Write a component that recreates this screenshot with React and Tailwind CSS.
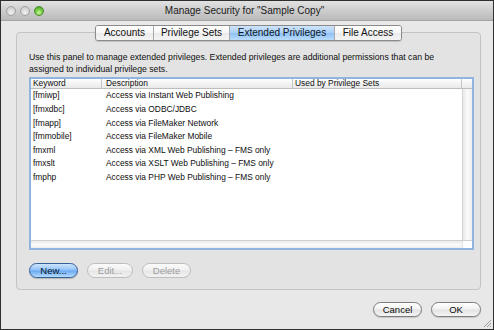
import React from "react";

const rows = [
  ["[fmiwp]", "Access via Instant Web Publishing"],
  ["[fmxdbc]", "Access via ODBC/JDBC"],
  ["[fmapp]", "Access via FileMaker Network"],
  ["[fmmobile]", "Access via FileMaker Mobile"],
  ["fmxml", "Access via XML Web Publishing – FMS only"],
  ["fmxslt", "Access via XSLT Web Publishing – FMS only"],
  ["fmphp", "Access via PHP Web Publishing – FMS only"],
];

const tabs = [
  ["Accounts", "w-[57px]", false],
  ["Privilege Sets", "w-[76px]", false],
  ["Extended Privileges", "w-[105px]", true],
  ["File Access", "w-[67px]", false],
];

function Light({ green }) {
  return (
    <div
      className={
        green
          ? "w-[10px] h-[10px] rounded-full border border-[#4c8a2c] bg-[radial-gradient(circle_at_50%_70%,#c8f59a,#6cc63a_55%,#3e9a1e)]"
          : "w-[10px] h-[10px] rounded-full border border-[#a2a2a2] bg-[radial-gradient(circle_at_50%_70%,#f2f2f2,#d4d4d4_60%,#c2c2c2)]"
      }
    />
  );
}

function Pill({ children, w, kind }) {
  const base =
    "h-[15px] rounded-full border flex items-center justify-center text-[9.5px] leading-none " + w + " ";
  if (kind === "blue")
    return (
      <div
        className={
          base +
          "border-[#365f96] text-[#08142a] bg-[linear-gradient(#cde5fd,#8fc2f7_48%,#68a8f0_52%,#b5dcff)] shadow-[0_1px_1px_rgba(0,0,0,0.2)]"
        }
      >
        {children}
      </div>
    );
  if (kind === "disabled")
    return (
      <div
        className={
          base +
          "border-[#bdbdbd] text-[#9c9c9c] bg-[linear-gradient(#fbfbfb,#f0f0f0_48%,#e6e6e6_52%,#f2f2f2)]"
        }
      >
        {children}
      </div>
    );
  return (
    <div
      className={
        base +
        "border-[#7c7c7c] text-[#0a0a0a] bg-[linear-gradient(#ffffff,#f2f2f2_48%,#e2e2e2_52%,#f5f5f5)] shadow-[0_1px_1px_rgba(0,0,0,0.15)]"
      }
    >
      {children}
    </div>
  );
}

export default function App() {
  return (
    <div className="w-[494px] h-[330px] box-border border border-[#2f2f2f] bg-[#e8e8e8] flex flex-col font-['Liberation_Sans',Arial,sans-serif] text-[#111] overflow-hidden">
      {/* Title bar */}
      <div className="h-[20px] shrink-0 flex items-center bg-[linear-gradient(#e2e2e2,#cdcdcd_50%,#bababa)] border-b border-[#a4a4a4]">
        <div className="flex items-center gap-[4px] pl-[5px]">
          <Light />
          <Light />
          <Light green />
        </div>
        <div className="flex-1 text-center text-[10px] text-[#1a1a1a] pr-[48px]">
          Manage Security for "Sample Copy"
        </div>
      </div>

      {/* Tabs */}
      <div className="flex justify-start pl-[94px] pt-[4px] relative z-10">
        <div className="flex h-[16px] rounded-[3px] border border-[#8a8a8a] overflow-hidden shadow-[0_1px_1px_rgba(0,0,0,0.15)]">
          {tabs.map(([t, w, sel], i) => (
            <div
              key={t}
              className={
                "flex items-center justify-center text-[10px] leading-none " +
                w +
                (i > 0 ? " border-l border-[#a9a9a9]" : "") +
                (sel
                  ? " bg-[linear-gradient(#cfe4fb,#a9d0f8_50%,#8fc0f4_52%,#b9dcfc)] text-[#0a1626]"
                  : " bg-[linear-gradient(#ffffff,#f6f6f6_50%,#ebebeb_52%,#f4f4f4)] text-[#111]")
              }
            >
              {t}
            </div>
          ))}
        </div>
      </div>

      {/* Group box */}
      <div className="-mt-[9px] ml-[15px] w-[465px] h-[258px] box-border rounded-[4px] border border-[#c3c3c3] bg-[#e3e3e3] flex flex-col pl-[12px] pt-[18px]">
        <div className="text-[8.7px] leading-[12px] text-[#0e0e0e]">
          Use this panel to manage extended privileges. Extended privileges are additional permissions that can be
          <br />
          assigned to individual privilege sets.
        </div>

        {/* Table */}
        <div className="mt-[2px] w-[445px] h-[173px] box-border border-2 border-[#92b5e0] bg-white flex flex-col text-[8.4px] text-[#0e0e0e]">
          <div className="h-[10px] shrink-0 flex bg-[linear-gradient(#ffffff,#f3f3f3_50%,#e9e9e9)] border-b border-[#bdbdbd]">
            <div className="w-[71px] pl-[2px] flex items-center border-r border-[#c6c6c6]">Keyword</div>
            <div className="w-[191px] pl-[4px] flex items-center border-r border-[#c6c6c6]">Description</div>
            <div className="w-[169px] pl-[2px] flex items-center border-r border-[#c6c6c6]">Used by Privilege Sets</div>
            <div className="flex-1" />
          </div>
          <div className="flex-1 flex min-h-0">
            <div className="w-[431px] flex flex-col">
              {rows.map(([k, d]) => (
                <div key={k} className="h-[13.6px] shrink-0 flex items-center">
                  <div className="w-[71px] pl-[2px]">{k}</div>
                  <div className="w-[191px] pl-[4px]">{d}</div>
                  <div className="flex-1" />
                </div>
              ))}
            </div>
            <div className="flex-1 border-l border-[#d6d6d6] bg-[linear-gradient(90deg,#e9e9e9,#fafafa_50%,#efefef)]" />
          </div>
          <div className="h-[8px] shrink-0 flex border-t border-[#cfcfcf]">
            <div className="w-[431px] bg-[linear-gradient(#e9e9e9,#fafafa_50%,#efefef)]" />
            <div className="flex-1 bg-white border-l border-[#e2e2e2]" />
          </div>
        </div>

        <div className="mt-[13px] flex gap-[9px]">
          <Pill w="w-[49px]" kind="blue">New...</Pill>
          <Pill w="w-[46px]" kind="disabled">Edit...</Pill>
          <Pill w="w-[49px]" kind="disabled">Delete</Pill>
        </div>
      </div>

      {/* Bottom buttons */}
      <div className="flex justify-end gap-[9px] pr-[12px] mt-[12px]">
        <Pill w="w-[49px]">Cancel</Pill>
        <Pill w="w-[50px]">OK</Pill>
      </div>

      <div className="flex-1 flex justify-end items-end pr-[1px] pb-[1px]">
        <svg width="9" height="9" viewBox="0 0 9 9">
          <line x1="8" y1="1" x2="1" y2="8" stroke="#8a8a8a" strokeWidth="0.8" />
          <line x1="8" y1="4" x2="4" y2="8" stroke="#8a8a8a" strokeWidth="0.8" />
          <line x1="8" y1="7" x2="7" y2="8" stroke="#8a8a8a" strokeWidth="0.8" />
        </svg>
      </div>
    </div>
  );
}
